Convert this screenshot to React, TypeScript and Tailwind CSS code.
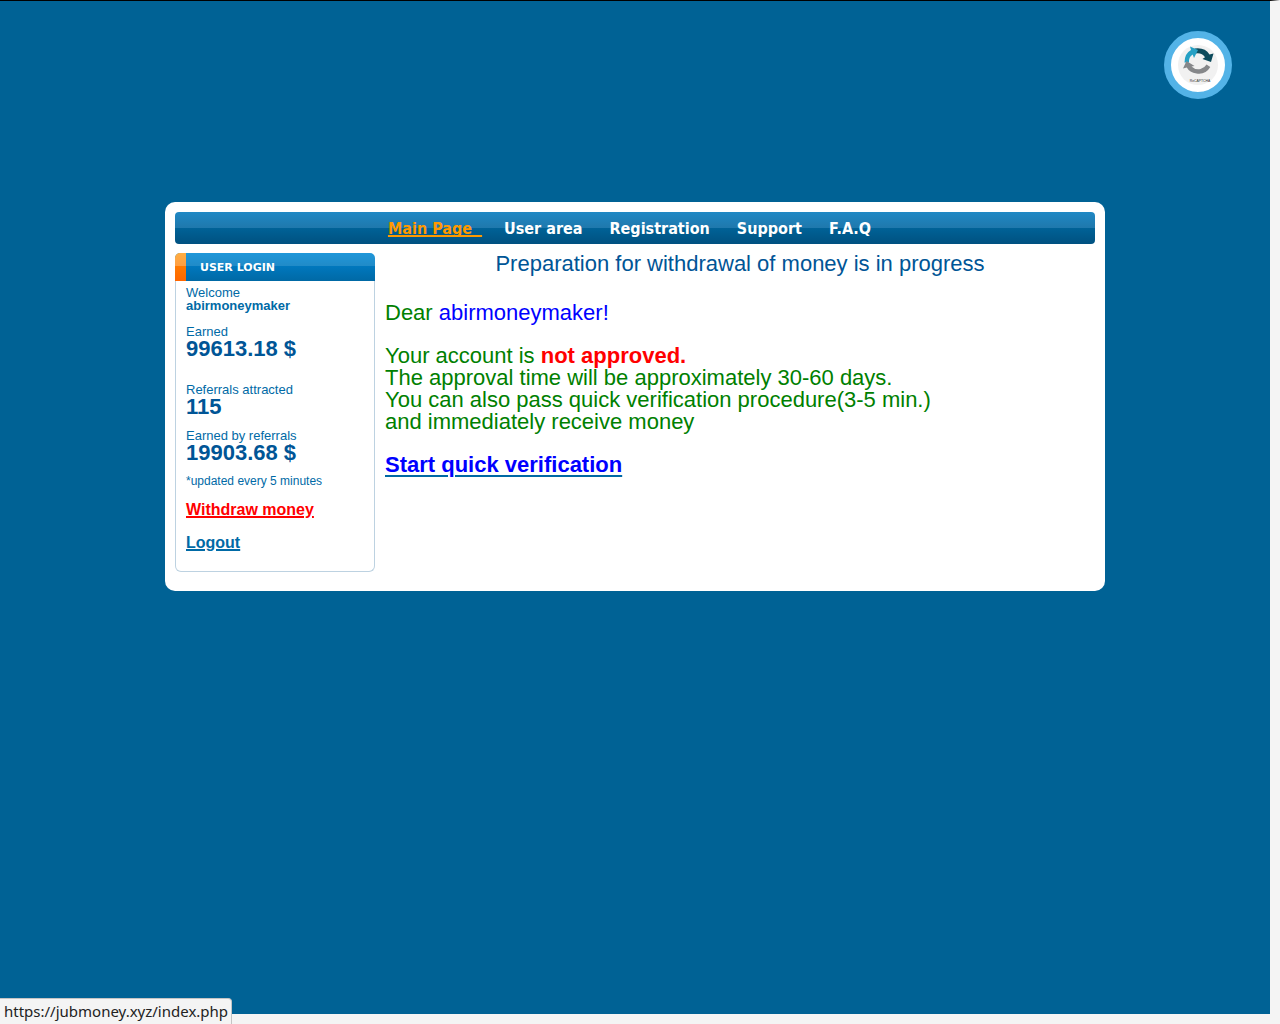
const navItems = ["User area", "Registration", "Support", "F.A.Q"];

function Stat({ label, value, className = "" }: { label: string; value: string; className?: string }) {
  return (
    <div className={className}>
      <dt>{label}</dt>
      <dd className="text-[22px] leading-[22px] font-bold text-[#005596]">{value}</dd>
    </div>
  );
}

function CaptchaBadge() {
  return (
    <button
      type="button"
      aria-label="ReCAPTCHA"
      className="absolute top-[30px] right-[38px] flex size-[68px] items-center justify-center rounded-full border-[7px] border-[#53b3e7] bg-white"
    >
      <svg viewBox="0 0 48 48" className="size-12 shrink-0">
        <circle cx="24" cy="24" r="20" fill="#f1f1f1" />
        <path d="M20.5 7.5 Q31 6 35.5 13.5 L39.5 12.5 L37 21 L28.5 18 L31 16.3 Q28 11.5 21.5 12.5 Z" fill="#0c4b5c" />
        <path d="M10.5 21.5 Q10.5 12.5 17 9 L16 5.5 L24 9 L20 17 L18.7 13.5 Q14.5 16 15 21.5 Z" fill="#25a0c4" />
        <path d="M12.5 20 L20.5 25 L17.5 25.5 Q21 29 26.5 28 Q30.5 27 32.5 23.5 L36.3 26 Q31.5 34 22.5 32.5 Q15.5 31.5 12.8 26.5 L9 27.5 Z" fill="#85878a" />
        <text x="26" y="41" textAnchor="middle" fontSize="3.4" fill="#333" fontFamily="Liberation Sans, sans-serif">
          ReCAPTCHA
        </text>
      </svg>
    </button>
  );
}

export default function App() {
  return (
    <div className="relative min-h-screen border-t border-r-[10px] border-b-[10px] border-t-black border-r-[#f4f4f4] border-b-[#f4f4f4] bg-[#006295] pt-[201px] font-['Liberation_Sans',Arial,sans-serif]">
      <CaptchaBadge />
      <div className="mx-auto max-w-[940px] rounded-[10px] bg-white px-[10px] pt-[10px] pb-[19px]">
        <nav className="flex h-8 items-center justify-center gap-x-[27px] rounded-[4px] bg-[linear-gradient(to_bottom,#1f88c4_0%,#1f78ac_50%,#006297_50%,#005180_100%)] pt-[2px] pr-[11px] font-['DejaVu_Sans_Condensed','DejaVu_Sans',sans-serif] text-[16px] font-bold text-white [font-stretch:condensed]">
          <a href="#main" className="-mr-[5px] whitespace-pre text-[#ff9900] underline decoration-2 [text-decoration-skip-ink:none]">{"Main Page  "}</a>
          {navItems.map((item) => (
            <a key={item} href="#nav">{item}</a>
          ))}
        </nav>
        <div className="mt-[9px] flex gap-[10px]">
          <aside className="w-[200px] shrink-0">
            <div className="flex h-7 overflow-hidden rounded-t-[5px] bg-[linear-gradient(to_bottom,#2097d9_0%,#208bc8_46%,#0078be_46%,#0069a5_100%)]">
              <div className="w-[11px] bg-[linear-gradient(to_bottom,#ffae42_0%,#ff9e42_46%,#ff7a00_46%,#ff6600_100%)]" />
              <h2 className="pl-[14px] font-['DejaVu_Sans',Verdana,sans-serif] text-[11px] leading-[29px] font-bold text-white">USER LOGIN</h2>
            </div>
            <div className="rounded-b-[6px] border border-t-0 border-[#bdd2e1] px-[10px] pt-[5px] pb-[18px] text-[13px] leading-[13px] text-[#006aa6]">
              <p>Welcome</p>
              <p className="font-bold">abirmoneymaker</p>
              <dl>
                <Stat label="Earned" value="99613.18 $" className="mt-[13px]" />
                <Stat label="Referrals attracted" value="115" className="mt-[23px]" />
                <Stat label="Earned by referrals" value="19903.68 $" className="mt-[11px]" />
              </dl>
              <p className="mt-[11px] text-[12px] leading-[13px]">*updated every 5 minutes</p>
              <p className="mt-3 text-[16px] leading-5 font-bold">
                <a href="#withdraw" className="text-[#ff0000] underline decoration-2">Withdraw money</a>
              </p>
              <p className="mt-[13px] text-[16px] leading-5 font-bold">
                <a href="#logout" className="underline decoration-2">Logout</a>
              </p>
            </div>
          </aside>
          <main className="min-w-0 flex-1 text-[22px] leading-[22px] text-[#008000]">
            <h1 className="text-center text-[#005596]">Preparation for withdrawal of money is in progress</h1>
            <p className="mt-[27px]">
              Dear <span className="text-[#0000ff]">abirmoneymaker!</span>
            </p>
            <p className="mt-[21px]">
              Your account is <b className="text-[#ff0000]">not approved.</b>
              <br />
              The approval time will be approximately 30-60 days.
              <br />
              You can also pass quick verification procedure(3-5 min.)
              <br />
              and immediately receive money
            </p>
            <p className="mt-[21px] font-bold">
              <a href="#verify" className="text-[#0000ff] underline decoration-[#0069a5] decoration-2 underline-offset-[3px]">Start quick verification</a>
            </p>
          </main>
        </div>
      </div>
      <div className="absolute -bottom-[10px] left-0 rounded-tr-[4px] border-t border-r border-[#c4c4c4] bg-[#f4f4f4] pr-[3px] pl-1 font-['Noto_Sans',sans-serif] text-[15px] leading-[25px] text-[#222]">
        https://jubmoney.xyz/index.php
      </div>
    </div>
  );
}
